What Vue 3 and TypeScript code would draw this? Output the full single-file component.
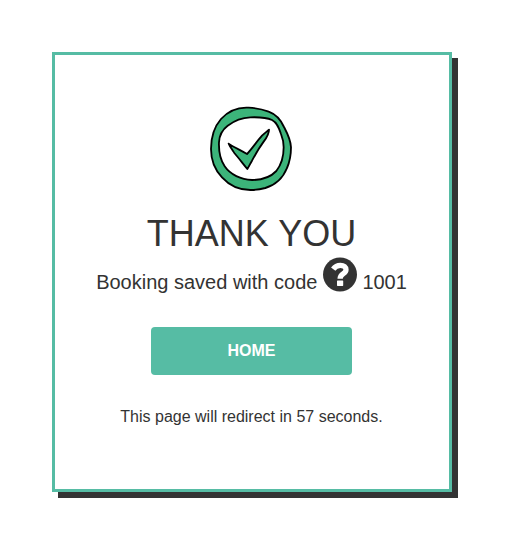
<script setup lang="ts">
import { ref } from 'vue'

const bookingId = ref<number>(1001)
const secondsLeft = ref<number>(57)
</script>

<template>
  <main class="page">
    <section class="card">
      <svg class="success" viewBox="6 6 258 258" aria-hidden="true">
        <path
          class="ring"
          fill-rule="evenodd"
          d="M125 11 C148 12 170 17 185 23 C210 32 222 49 231 69 C241 88 251 106 252 130 C252 155 249 172 240 192 C228 222 205 243 175 252 C160 256 145 258 130 258 C98 258 66 243 45 220 C22 196 12 166 12 135 C12 100 22 68 42 45 C63 22 92 9 125 11 Z
             M130 40 C158 39 182 42 195 48 C210 55 216 72 222 90 C228 105 230 115 230 130 C230 155 224 181 208 201 C190 220 162 228 135 228 C102 227 70 212 53 187 C40 168 35 140 36 115 C37 92 46 77 62 65 C82 50 104 41 130 40 Z"
        />
        <path
          class="tick"
          d="M65 119 C82 130 101 139 120 150 C136 133 148 114 165 95 C172 88 179 83 186 77 C186 89 179 101 170 113 C153 136 144 153 135 170 C130 178 126 187 121 195 C107 178 95 162 82 147 C76 138 69 129 65 119 Z"
        />
      </svg>
      <h1 class="title">THANK YOU</h1>
      <p class="message">
        <span>Booking saved with code</span>
        <svg class="badge" viewBox="0 0 34 34" aria-hidden="true">
          <circle class="disc" cx="17" cy="17" r="17" />
          <path class="hook" d="M10.2 11.6 C12.2 8.8 14.5 7.9 17.4 7.9 C21 7.9 23 9.7 23 12.2 C23 16.4 17.1 15.8 17.1 21.2" />
          <rect class="dot" x="14" y="23" width="6.2" height="5.4" rx="0.6" />
        </svg>
        <span>{{ bookingId }}</span>
      </p>
      <button class="home" type="button">HOME</button>
      <p class="redirect">This page will redirect in {{ secondsLeft }} seconds.</p>
    </section>
  </main>
</template>

<style>
body {
  background: #fff;
}
</style>

<style scoped>
.page {
  box-sizing: border-box;
  padding: 52px;
  font-family: "Liberation Sans", Arial, sans-serif;
  color: #333;
}
.card {
  box-sizing: border-box;
  display: flex;
  flex-direction: column;
  align-items: center;
  width: 400px;
  height: 440px;
  padding: 51px 1px 0 0;
  border: 3px solid #56bca4;
  background: #fff;
  box-shadow: 6px 6px 0 #333;
}
.success {
  display: block;
  width: 86px;
  height: 86px;
}
.ring,
.tick {
  fill: #3cb47a;
  stroke: #000;
  stroke-width: 5.5;
  stroke-linejoin: round;
}
.title {
  margin: 22px 0 0;
  font-size: 36px;
  font-weight: 400;
  line-height: 40px;
}
.message {
  display: flex;
  align-items: flex-end;
  gap: 5.5px;
  height: 35px;
  margin: 3px 0 0;
  font-size: 20px;
  line-height: 20px;
}
.badge {
  width: 34px;
  height: 35px;
}
.disc {
  fill: #333;
}
.hook {
  fill: none;
  stroke: #fff;
  stroke-width: 5.3;
}
.dot {
  fill: #fff;
}
.home {
  width: 201px;
  height: 48px;
  margin: 35px 0 0;
  padding: 0;
  border: 0;
  border-radius: 4px;
  background: #56bca4;
  color: #fff;
  font: 700 16px/48px "Liberation Sans", Arial, sans-serif;
}
.redirect {
  margin: 30px 0 0;
  font-size: 16px;
  line-height: 23px;
}
</style>
